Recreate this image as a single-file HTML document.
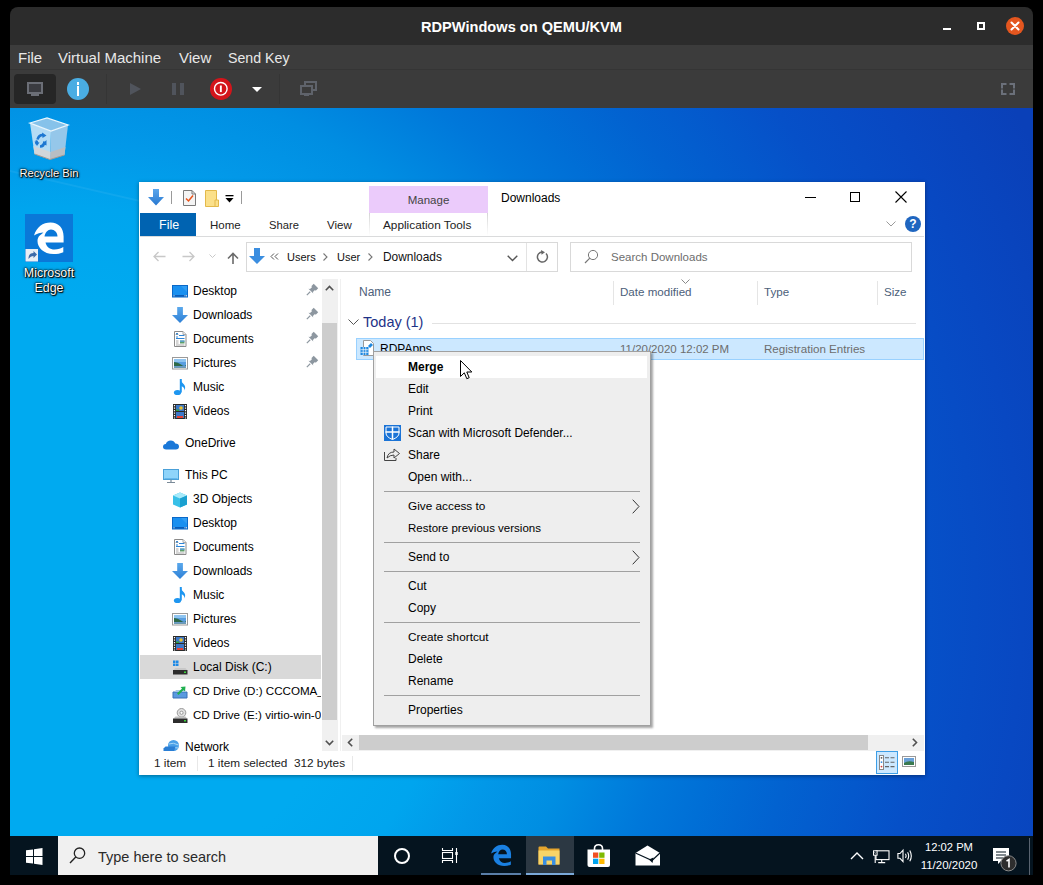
<!DOCTYPE html>
<html><head><meta charset="utf-8">
<style>
*{margin:0;padding:0;box-sizing:border-box}
html,body{width:1043px;height:885px;overflow:hidden;background:#000;font-family:"Liberation Sans",sans-serif}
.a{position:absolute}
svg{position:absolute;overflow:visible}
.s12{position:absolute;font-size:12px;line-height:16px;white-space:nowrap;color:#000}
.vmt{position:absolute;font-size:15px;line-height:20px;white-space:nowrap;color:#e8e8e8}
#vm{position:absolute;left:10px;top:7px;width:1023px;height:868px;border-radius:8px 8px 0 0;overflow:hidden;background:#2c2c2c}
#desk{position:absolute;left:10px;top:108px;width:1023px;height:767px;overflow:hidden;
 background:radial-gradient(circle at 55px 492px,#00aaf0 0px,#00aaf0 300px,#00a5ee 393px,#0298e8 458px,#008ee2 527px,#0078da 616px,#006fd6 667px,#0262d0 741px,#0458cc 811px,#0650c8 864px,#0848c2 957px,#0a40b8 1070px)}
.dt{position:absolute;font-size:12px;line-height:15px;color:#fff;text-align:center;white-space:nowrap;text-shadow:0 0 1px #000,1px 1px 1px #000,0 0 2px #000,0 0 3px rgba(0,0,0,.7)}
</style></head><body>
<div id="vm">
 <!-- title bar -->
 <div class="a" style="left:0;top:31px;width:1023px;height:7px;background:#2c2c2c"></div>
 <div class="a" style="left:0;top:11px;width:1023px;text-align:center;color:#fff;font-weight:bold;font-size:14.6px;line-height:18px">RDPWindows on QEMU/KVM</div>
 <!-- menu bar -->
 <div class="a" style="left:0;top:38px;width:1023px;height:24px;background:#3c3c3c"></div>
 <div class="a" style="left:0;top:62px;width:1023px;height:1px;background:#353535"></div>
 <div class="vmt" style="left:8px;top:41px">File</div>
 <div class="vmt" style="left:48px;top:41px">Virtual Machine</div>
 <div class="vmt" style="left:169px;top:41px">View</div>
 <div class="vmt" style="left:218px;top:41px;font-size:14.2px">Send Key</div>
 <!-- toolbar -->
 <div class="a" style="left:0;top:63px;width:1023px;height:38px;background:#3b3b3b"></div>
</div>
<!-- window controls -->
<div class="a" style="left:943px;top:28px;width:8px;height:2px;background:#fff"></div>
<div class="a" style="left:977px;top:22px;width:8px;height:8px;border:2px solid #fff"></div>
<div class="a" style="left:1006px;top:17px;width:18px;height:18px;border-radius:50%;background:#e4561f"></div>
<svg style="left:1006px;top:17px" width="18" height="18"><path d="M5.5 5.5L12.5 12.5M12.5 5.5L5.5 12.5" stroke="#fff" stroke-width="2" stroke-linecap="round"/></svg>
<!-- toolbar icons -->
<div class="a" style="left:14px;top:74px;width:42px;height:30px;border-radius:4px;background:#262626"></div>
<svg style="left:27px;top:82px" width="16" height="14"><rect x="1" y="1" width="14" height="10" fill="#3a3b40" stroke="#6b6e76" stroke-width="2"/><rect x="4" y="12" width="8" height="2" fill="#6b6e76"/></svg>
<div class="a" style="left:67px;top:78px;width:22px;height:22px;border-radius:50%;background:#4aade3"></div>
<div class="a" style="left:77px;top:82px;width:2px;height:2.5px;background:#fff"></div>
<div class="a" style="left:77px;top:86px;width:2px;height:10px;background:#fff"></div>
<div class="a" style="left:106px;top:74px;width:1px;height:30px;background:#353535"></div>
<svg style="left:130px;top:83px" width="12" height="12"><path d="M0 0L11 6L0 12Z" fill="#50545c"/></svg>
<div class="a" style="left:172px;top:83px;width:4px;height:12px;background:#50545c"></div>
<div class="a" style="left:180px;top:83px;width:4px;height:12px;background:#50545c"></div>
<div class="a" style="left:210px;top:78px;width:21.5px;height:21.5px;border-radius:50%;background:#d3151b"></div>
<svg style="left:210px;top:78px" width="22" height="22"><circle cx="10.8" cy="10.8" r="6.3" fill="none" stroke="#fff" stroke-width="1.4"/><rect x="9.9" y="7.5" width="1.9" height="6.6" fill="#fff"/></svg>
<svg style="left:252px;top:87px" width="10" height="5"><path d="M0 0H10L5 5Z" fill="#fff"/></svg>
<div class="a" style="left:279px;top:74px;width:1px;height:30px;background:#353535"></div>
<svg style="left:300px;top:81px" width="17" height="15"><rect x="5" y="1" width="11" height="8" fill="none" stroke="#5f636b" stroke-width="2"/><rect x="1" y="5" width="11" height="8" fill="#3b3b3b" stroke="#5f636b" stroke-width="2"/><rect x="4" y="13" width="5" height="2" fill="#5f636b"/></svg>
<svg style="left:1001px;top:83px" width="14" height="12"><path d="M1 4.5V1H4.5M9.5 1H13V4.5M13 7.5V11H9.5M4.5 11H1V7.5" fill="none" stroke="#6b707a" stroke-width="2" stroke-linecap="square"/></svg>

<div id="desk">
 <!-- beams -->
 <div class="a" style="left:0px;top:62px;width:700px;height:1.5px;background:rgba(255,255,255,.06);transform:rotate(13deg);transform-origin:0 0"></div>
 <!-- recycle bin -->
 <svg style="left:19px;top:9px" width="40" height="44" viewBox="0 0 40 44">
  <path d="M1 6 L22 14 L21 42.5 L5.5 37 Z" fill="#b4dcf5"/>
  <path d="M22 14 L39 8 L35.5 38 L21 42.5 Z" fill="#95c7ea"/>
  <path d="M4.3 29 L21.6 35 L21 42.5 L5.5 37Z" fill="#d2d6da"/>
  <path d="M21.6 35 L36.5 30 L35.5 38 L21 42.5 Z" fill="#b9bec3"/>
  <path d="M5.5 37 L21 42.5 L35.5 38" fill="none" stroke="#a09a94" stroke-width="1"/>
  <path d="M1 6 L18 1 L39 8 L22 14 Z" fill="#86c2ea" stroke="#eaf6fd" stroke-width="1.3"/>
  <g fill="none" stroke="#1e78d2" stroke-width="2.6">
   <path d="M8.5 22.5 Q10 17.5 14.5 18"/>
   <path d="M15.5 24.5 Q15 29.5 11 29.5"/>
   <path d="M8 27 Q7 25.5 8 23.5"/>
  </g>
  <g fill="#1e78d2"><path d="M13 15.5 L17.5 18.5 L13.5 21Z"/><path d="M17.5 23 L13.5 27 L17.5 28.5Z"/><path d="M5.5 24.5 L8 29 L10.5 25.5Z"/></g>
 </svg>
 <div class="dt" style="left:9px;top:58px;width:60px;font-size:11.2px">Recycle Bin</div>
 <!-- edge -->
 <div class="a" style="left:15px;top:106px;width:48px;height:48px;background:#0a78d8"></div>
 <svg style="left:15px;top:106px" width="48" height="48" viewBox="0 0 48 48">
  <path fill-rule="evenodd" fill="#fff" d="M38.6 28.5 L20.5 28.5 C21.5 33 25 35.5 29.5 35.5 C33 35.5 36 34.5 38.3 33 L38.3 38.2 C35.5 39.5 32 40 28.5 40 C18.5 40 12.5 33.5 12.5 27 C12.5 25 13.2 23.2 14.5 21.8 L18.5 18.5 C15.5 18.5 12 19.5 9 21.5 C11.5 13 18 8.5 25.5 8.5 C33.5 8.5 38.6 14 38.6 22.5 Z M19.5 22.5 L32.5 22.5 C32.5 18.5 29.5 15.5 26 15.5 C22.8 15.5 20.2 18.5 19.5 22.5 Z"/>
  <rect x="0.5" y="35" width="12.5" height="12.5" fill="#e8eef4"/>
  <path d="M3.5 45 C3.5 41 5 39 8.5 39 L8.5 37 L12 40.5 L8.5 44 L8.5 42 C6.5 42 5 43 3.5 45Z" fill="#3c6aa8"/>
 </svg>
 <div class="dt" style="left:8px;top:158px;width:62px;font-size:12.4px;line-height:15px">Microsoft<br>Edge</div>
 <!-- taskbar -->
 <div class="a" style="left:0;top:728px;width:1023px;height:39px;background:#05141f"></div>
 <svg style="left:16px;top:740px" width="17" height="17" viewBox="0 0 17 17"><path d="M0 2.3L7 1.4V8H0Z M8 1.2L16.5 0V8H8Z M0 9H7V15.6L0 14.7Z M8 9H16.5V17L8 15.8Z" fill="#fff"/></svg>
 <div class="a" style="left:48px;top:728px;width:320px;height:39px;background:#f0f0f0"></div>
 <svg style="left:59px;top:739px" width="20" height="20"><circle cx="10.5" cy="6.2" r="5.2" fill="none" stroke="#222" stroke-width="1.3"/><path d="M7 9.8L1 16" stroke="#222" stroke-width="1.4"/></svg>
 <div class="a" style="left:88px;top:740px;font-size:14.5px;line-height:18px;color:#2a2a2a;white-space:nowrap">Type here to search</div>
 <svg style="left:383px;top:738px" width="18" height="18"><circle cx="9" cy="10" r="7" fill="none" stroke="#fff" stroke-width="2"/></svg>
 <svg style="left:431px;top:739px" width="18" height="17" viewBox="0 0 18 17"><path d="M1.5 1V3.5H11.5V1M1.5 16V13.5H11.5V16M15.5 1V16" fill="none" stroke="#fff" stroke-width="1.1"/><rect x="1.5" y="5.5" width="10" height="6" fill="none" stroke="#fff" stroke-width="1.1"/><rect x="14.3" y="5" width="2.4" height="3" fill="#fff"/></svg>
 <!-- edge task -->
 <svg style="left:475px;top:731px" width="32.4" height="32.4" viewBox="0 0 48 48">
  <path fill-rule="evenodd" fill="#1a80e2" d="M38.6 28.5 L20.5 28.5 C21.5 33 25 35.5 29.5 35.5 C33 35.5 36 34.5 38.3 33 L38.3 38.2 C35.5 39.5 32 40 28.5 40 C18.5 40 12.5 33.5 12.5 27 C12.5 25 13.2 23.2 14.5 21.8 L18.5 18.5 C15.5 18.5 12 19.5 9 21.5 C11.5 13 18 8.5 25.5 8.5 C33.5 8.5 38.6 14 38.6 22.5 Z M19.5 22.5 L32.5 22.5 C32.5 18.5 29.5 15.5 26 15.5 C22.8 15.5 20.2 18.5 19.5 22.5 Z"/>
 </svg>
 <div class="a" style="left:471px;top:765px;width:40px;height:2px;background:#5a7ea8"></div>
 <div class="a" style="left:516px;top:728px;width:48px;height:39px;background:#2c3843"></div>
 <div class="a" style="left:516px;top:765px;width:48px;height:2px;background:#7aa8d8"></div>
 <svg style="left:528px;top:738px" width="23" height="20" viewBox="0 0 23 20">
  <path d="M0.5 1.5Q0.5 0.5 1.5 0.5H8L10 2.5H21.5V18.5H0.5Z" fill="#e6a52e"/>
  <path d="M0.5 4.5H21.5V18.5H0.5Z" fill="#f8d468"/>
  <path d="M5 10.5H17.5V19H14V14.5H8.5V19H5Z" fill="#3a8ee0"/>
 </svg>
 <svg style="left:577px;top:736px" width="24" height="24" viewBox="0 0 24 24">
  <path d="M7.5 6.5V4.5Q7.5 0.8 11.5 0.8Q15.5 0.8 15.5 4.5V6.5" fill="none" stroke="#fff" stroke-width="1.6"/>
  <path d="M0.5 5.5H23V21Q23 23 21 23H2.5Q0.5 23 0.5 21Z" fill="#fff"/>
  <rect x="6" y="8.5" width="5.3" height="5.3" fill="#f25022"/><rect x="12.2" y="8.5" width="5.3" height="5.3" fill="#7fba00"/>
  <rect x="6" y="14.7" width="5.3" height="5.3" fill="#00a4ef"/><rect x="12.2" y="14.7" width="5.3" height="5.3" fill="#ffb900"/>
 </svg>
 <svg style="left:625px;top:737px" width="26" height="21" viewBox="0 0 26 21">
  <path d="M0.5 8L12.5 0.5L25 8V20.5H0.5Z" fill="#fff"/>
  <path d="M0.5 8L17 15.5L25 8" fill="none" stroke="#05141f" stroke-width="1.2"/>
  <path d="M14 14.5L18.5 12.5L17.5 18Z" fill="#05141f"/>
 </svg>
 <!-- tray -->
 <svg style="left:840px;top:743px" width="14" height="9"><path d="M1 8L7 2L13 8" fill="none" stroke="#fff" stroke-width="1.4"/></svg>
 <svg style="left:863px;top:742px" width="18" height="15" viewBox="0 0 18 15"><rect x="3" y="0.8" width="13" height="8.8" fill="none" stroke="#fff" stroke-width="1.1"/><rect x="0.5" y="0.8" width="3.6" height="4.4" fill="#05141f" stroke="#fff" stroke-width="1"/><path d="M1.4 2.4L2.3 3.4L3.2 2.4" fill="none" stroke="#fff" stroke-width=".7"/><path d="M2.2 5.2V13M8.7 9.6V12.6M5.2 12.6H12.2" stroke="#fff" stroke-width="1.1"/></svg>
 <svg style="left:887px;top:741px" width="18" height="15" viewBox="0 0 18 15"><path d="M0.9 4.5H3L6 1.2V12.6L3 9.3H0.9Z" fill="none" stroke="#fff" stroke-width="1.1"/><path d="M8.5 4.8Q9.8 6.9 8.5 9M10.6 3.2Q12.8 6.9 10.6 10.6M12.8 1.5Q15.8 6.9 12.8 12.3" fill="none" stroke="#fff" stroke-width="1.1"/></svg>
 <div class="a" style="left:915px;top:731px;width:48px;text-align:center;color:#fff;font-size:11.2px;line-height:16px">12:02 PM</div>
 <div class="a" style="left:909px;top:749px;width:60px;text-align:center;color:#fff;font-size:11.5px;line-height:16px">11/20/2020</div>
 <svg style="left:982px;top:739px" width="26" height="26" viewBox="0 0 26 26">
  <path d="M1 1H17V14H9L6 17V14H1Z" fill="#fff"/>
  <path d="M4 5H14M4 8H14M4 11H11" stroke="#05141f" stroke-width="1.2"/>
  <circle cx="16.5" cy="16.3" r="7.6" fill="#2e2e2e" stroke="#8a8a8a" stroke-width="1"/>
  <path d="M14.5 14.2L17 12.5V20.5" fill="none" stroke="#fff" stroke-width="1.6"/>
 </svg>
 <div class="a" style="left:1019px;top:730px;width:1px;height:37px;background:#5a6470"></div>
</div>
<!-- EXPLORER -->
<div class="a" style="left:139px;top:182px;width:786px;height:593px;background:#fff;box-shadow:0 1px 4px rgba(0,0,0,.4)"></div>
<svg style="left:148px;top:189px" width="16" height="17" viewBox="0 0 16 17"><defs><linearGradient id="dg" x1="0" x2="0" y1="0" y2="1"><stop offset="0" stop-color="#5aa6ec"/><stop offset="1" stop-color="#2878d0"/></linearGradient></defs><path d="M5 0H11V8H16L8 16.5L0 8H5Z" fill="url(#dg)"/></svg>
<div class="a" style="left:171px;top:191px;width:1px;height:13px;background:#9a9a9a"></div>
<svg style="left:183px;top:190px" width="13" height="16" viewBox="0 0 13 16"><path d="M0.5 0.5H9L12.5 4V15.5H0.5Z" fill="#f4f4f4" stroke="#7a7a7a"/><path d="M9 0.5V4H12.5" fill="none" stroke="#7a7a7a"/><path d="M3 8.5L5.5 11L10 5.5" fill="none" stroke="#e8541c" stroke-width="1.5"/></svg>
<svg style="left:205px;top:190px" width="14" height="17" viewBox="0 0 14 17"><path d="M0.5 0.5H11.5V16.5H0.5Z" fill="#fbe08a" stroke="#e3b94a"/><path d="M10 10H13.5V16.5H10Z" fill="#fbe08a" stroke="#e3b94a"/></svg>
<svg style="left:225px;top:195px" width="9" height="8"><rect x="0.5" y="0" width="8" height="1.3" fill="#000"/><path d="M0.5 3H8.5L4.5 7.5Z" fill="#000"/></svg>
<div class="a" style="left:241px;top:191px;width:1px;height:13px;background:#9a9a9a"></div>
<div class="a" style="left:369px;top:186px;width:119px;height:27px;background:#ebcbfb"></div>
<div class="s12" style="left:369px;top:192px;width:119px;text-align:center;color:#444;font-size:11.5px">Manage</div>
<div class="s12" style="left:501px;top:190px;color:#000">Downloads</div>
<div class="a" style="left:805px;top:197px;width:11px;height:1px;background:#000"></div>
<div class="a" style="left:850px;top:192px;width:10px;height:10px;border:1px solid #000"></div>
<svg style="left:895px;top:191px" width="12" height="12"><path d="M0.5 0.5L11.5 11.5M11.5 0.5L0.5 11.5" stroke="#000" stroke-width="1.1"/></svg>
<div class="a" style="left:140px;top:213px;width:56px;height:23px;background:#0063b1"></div>
<div class="s12" style="left:159px;top:217px;color:#fff;font-size:12.5px">File</div>
<div class="s12" style="left:210px;top:217px;color:#222;font-size:11.5px">Home</div>
<div class="s12" style="left:269px;top:217px;color:#222;font-size:11.2px">Share</div>
<div class="s12" style="left:327px;top:217px;color:#222;font-size:11.5px">View</div>
<div class="a" style="left:369px;top:213px;width:1px;height:23px;background:linear-gradient(#d5d5d5,#fff)"></div>
<div class="a" style="left:487px;top:213px;width:1px;height:23px;background:linear-gradient(#d5d5d5,#fff)"></div>
<div class="s12" style="left:383px;top:217px;color:#222;font-size:11.8px">Application Tools</div>
<svg style="left:886px;top:221px" width="10" height="6"><path d="M0.5 0.5L5 5L9.5 0.5" fill="none" stroke="#9a9a9a" stroke-width="1"/></svg>
<div class="a" style="left:905px;top:216px;width:16px;height:16px;border-radius:50%;background:#1f66c0"></div>
<div class="a" style="left:905px;top:216px;width:16px;height:16px;text-align:center;color:#fff;font-weight:bold;font-size:12px;line-height:16px">?</div>
<div class="a" style="left:140px;top:236px;width:784px;height:1px;background:#dadbdc"></div>
<svg style="left:153px;top:251px" width="13" height="11"><path d="M12.5 5.5H1M5.5 1L1 5.5L5.5 10" fill="none" stroke="#c8c8c8" stroke-width="1.3"/></svg>
<svg style="left:182px;top:251px" width="13" height="11"><path d="M0.5 5.5H12M7.5 1L12 5.5L7.5 10" fill="none" stroke="#c8c8c8" stroke-width="1.3"/></svg>
<svg style="left:209px;top:254px" width="7" height="5"><path d="M0.5 0.5L3.5 3.5L6.5 0.5" fill="none" stroke="#c8c8c8" stroke-width="1"/></svg>
<svg style="left:227px;top:252px" width="12" height="12"><path d="M6 12V1.5M1 6.5L6 1.5L11 6.5" fill="none" stroke="#6a6a6a" stroke-width="1.6"/></svg>
<div class="a" style="left:246px;top:242px;width:312px;height:30px;border:1px solid #d9d9d9"></div>
<div class="a" style="left:526px;top:243px;width:1px;height:28px;background:#e3e3e3"></div>
<svg style="left:249px;top:248px" width="16" height="16" viewBox="0 0 16 16"><path d="M5 0H11V8H16L8 16L0 8H5Z" fill="#3b8ee0"/></svg>
<svg style="left:270px;top:253px" width="9" height="7"><path d="M4 0.5L1 3.5L4 6.5M8 0.5L5 3.5L8 6.5" fill="none" stroke="#555" stroke-width="1"/></svg>
<div class="s12" style="left:287px;top:249px;color:#111;font-size:11px">Users</div>
<svg style="left:323px;top:253px" width="5" height="8"><path d="M0.5 0.5L4 4L0.5 7.5" fill="none" stroke="#777" stroke-width="1.1"/></svg>
<div class="s12" style="left:337px;top:249px;color:#111;font-size:11px">User</div>
<svg style="left:368px;top:253px" width="5" height="8"><path d="M0.5 0.5L4 4L0.5 7.5" fill="none" stroke="#777" stroke-width="1.1"/></svg>
<div class="s12" style="left:383px;top:249px;color:#111;font-size:11.9px">Downloads</div>
<svg style="left:507px;top:255px" width="11" height="7"><path d="M0.7 0.7L5.5 5.5L10.3 0.7" fill="none" stroke="#555" stroke-width="1.4"/></svg>
<svg style="left:536px;top:250px" width="13" height="14"><path d="M10 3.5A5 5 0 1 1 6.5 2" fill="none" stroke="#666" stroke-width="1.5"/><path d="M5 0L9 2.2L5.5 4.8Z" fill="#666"/></svg>
<div class="a" style="left:570px;top:242px;width:342px;height:30px;border:1px solid #d9d9d9"></div>
<svg style="left:584px;top:249px" width="15" height="15"><circle cx="9" cy="6" r="4.6" fill="none" stroke="#777" stroke-width="1"/><path d="M5.8 9.2L1 14" stroke="#777" stroke-width="1.2"/></svg>
<div class="s12" style="left:611px;top:249px;color:#6d6d6d;font-size:11.5px">Search Downloads</div>
<div class="a" style="left:322px;top:279px;width:16px;height:472px;background:#f0f0f0"></div>
<div class="a" style="left:322px;top:323px;width:15px;height:397px;background:#cdcdcd"></div>
<svg style="left:325px;top:285px" width="9" height="6"><path d="M0.8 5.2L4.5 1.5L8.2 5.2" fill="none" stroke="#505050" stroke-width="1.6"/></svg>
<svg style="left:325px;top:740px" width="9" height="6"><path d="M0.8 0.8L4.5 4.5L8.2 0.8" fill="none" stroke="#505050" stroke-width="1.6"/></svg>
<div class="a" style="left:340px;top:279px;width:1px;height:472px;background:#f0f0f0"></div>
<div class="a" style="left:140px;top:655px;width:181px;height:24px;background:#d9d9d9"></div>
<!-- NAV START -->
<svg style="left:172px;top:284px" width="16" height="16" viewBox="0 0 16 16"><rect x="0.5" y="1.5" width="15" height="11.5" fill="#1a90f0" stroke="#0a68c8"/><path d="M9 2L15 2L15 8Z" fill="#40a8f6" opacity=".6"/><rect x="1" y="11" width="14" height="1.6" fill="#0a5cb8"/><rect x="1.5" y="11.3" width="1" height="1" fill="#fff"/><rect x="12.5" y="11.3" width="1" height="1" fill="#fff"/><rect x="14" y="11.3" width="1" height="1" fill="#fff"/></svg>
<div class="s12" style="left:193px;top:283px;">Desktop</div>
<svg style="left:306px;top:283px" width="13" height="13" viewBox="0 0 16 16"><path d="M5.2 10.8L1 15" stroke="#8d97a0" stroke-width="1.4"/><path d="M6.5 4L9.5 1L15 6.5L12 9.5L11 8.5L8.5 11L9 13L3 7L5 7.5L7.5 5Z" fill="#8d97a0"/></svg>
<svg style="left:172px;top:308px" width="16" height="16" viewBox="0 0 16 16"><defs><linearGradient id="dgn" x1="0" x2="0" y1="0" y2="1"><stop offset="0" stop-color="#5aa8ec"/><stop offset="1" stop-color="#2e80d6"/></linearGradient></defs><path d="M5.2 -1H10.9V7H16L8 15L0 7H5.2Z" fill="url(#dgn)"/></svg>
<div class="s12" style="left:193px;top:307px;">Downloads</div>
<svg style="left:306px;top:307px" width="13" height="13" viewBox="0 0 16 16"><path d="M5.2 10.8L1 15" stroke="#8d97a0" stroke-width="1.4"/><path d="M6.5 4L9.5 1L15 6.5L12 9.5L11 8.5L8.5 11L9 13L3 7L5 7.5L7.5 5Z" fill="#8d97a0"/></svg>
<svg style="left:172px;top:332px" width="16" height="16" viewBox="0 0 16 16"><path d="M2.5 -0.5H11L14 2.5V14.5H2.5Z" fill="#fff" stroke="#8a8a8a"/><path d="M11 -0.5V2.5H14" fill="#eee" stroke="#aaa"/><path d="M4 5H6M4 2.5L5 1L6 2.5" stroke="#2e86d8" stroke-width="1"/><path d="M7 3.5H12.5M4 6.5H12.5" stroke="#2e86d8" stroke-width="1"/><path d="M4 9H6.5M4 11H6.5M4 13H12.5" stroke="#a0a0a0" stroke-width=".9"/><rect x="8" y="8.5" width="4.5" height="3" fill="#5e9e6a"/><rect x="8" y="8.5" width="4.5" height="1.2" fill="#5aa0e8"/></svg>
<div class="s12" style="left:193px;top:331px;">Documents</div>
<svg style="left:306px;top:331px" width="13" height="13" viewBox="0 0 16 16"><path d="M5.2 10.8L1 15" stroke="#8d97a0" stroke-width="1.4"/><path d="M6.5 4L9.5 1L15 6.5L12 9.5L11 8.5L8.5 11L9 13L3 7L5 7.5L7.5 5Z" fill="#8d97a0"/></svg>
<svg style="left:172px;top:356px" width="16" height="16" viewBox="0 0 16 16"><rect x="0.5" y="1.5" width="15" height="11.5" fill="#fff" stroke="#9a9a9a"/><rect x="2" y="3" width="12" height="8.5" fill="#5a9ee0"/><rect x="2" y="3" width="12" height="3" fill="#8ec4f0"/><path d="M2 6Q6 6 9 8.5T14 9V11.5H2Z" fill="#2e6a48"/><rect x="2" y="10" width="12" height="1.5" fill="#6a9ac8"/></svg>
<div class="s12" style="left:193px;top:355px;">Pictures</div>
<svg style="left:306px;top:355px" width="13" height="13" viewBox="0 0 16 16"><path d="M5.2 10.8L1 15" stroke="#8d97a0" stroke-width="1.4"/><path d="M6.5 4L9.5 1L15 6.5L12 9.5L11 8.5L8.5 11L9 13L3 7L5 7.5L7.5 5Z" fill="#8d97a0"/></svg>
<svg style="left:172px;top:380px" width="16" height="16" viewBox="0 0 16 16"><path d="M8.8 -1V12.5" stroke="#1e96f0" stroke-width="2"/><ellipse cx="5.5" cy="12.5" rx="3.6" ry="2.6" fill="#1e96f0"/><path d="M8 -1Q9.5 2.5 12 4.5Q14 6.5 12.5 10.5Q12.8 7 9 6Z" fill="#1e96f0"/></svg>
<div class="s12" style="left:193px;top:379px;">Music</div>
<svg style="left:172px;top:404px" width="16" height="16" viewBox="0 0 16 16"><rect x="1" y="0" width="14" height="15" fill="#2a2a2a"/><rect x="4" y="1" width="8" height="6" fill="#3c78c8"/><rect x="4" y="8" width="8" height="6" fill="#3c78c8"/><circle cx="9" cy="4" r="1.8" fill="#e8c030"/><rect x="4" y="5.5" width="3" height="1.5" fill="#30a040"/><rect x="5" y="12" width="6" height="2" fill="#e84030"/><path d="M2.5 1V14.5M13.5 1V14.5" stroke="#fff" stroke-width="1.2" stroke-dasharray="1.2 1.3"/></svg>
<div class="s12" style="left:193px;top:403px;">Videos</div>
<svg style="left:163px;top:436px" width="16" height="16" viewBox="0 0 16 16"><path d="M3.2 13.5Q0 13.5 0 10.8Q0 8.3 2.8 8Q3.8 4.5 7.8 4.5Q11 4.5 12.3 7.5Q16 7.6 16 10.6Q16 13.5 12.8 13.5Z" fill="#1a78d8"/></svg>
<div class="s12" style="left:185px;top:435px;">OneDrive</div>
<svg style="left:163px;top:468px" width="16" height="16" viewBox="0 0 16 16"><rect x="0.5" y="1.5" width="15" height="10" fill="#8fd4fa" stroke="#4aa0d8"/><path d="M1.5 10.5H14.5" stroke="#64b8ec"/><path d="M8 11.5V14M4 14.5H12" stroke="#7a8a98" stroke-width="1.2"/></svg>
<div class="s12" style="left:185px;top:467px;">This PC</div>
<svg style="left:172px;top:492px" width="16" height="16" viewBox="0 0 16 16"><path d="M8 0.5L15 3.5V12.5L8 15.5L1 12.5V3.5Z" fill="#38c0e8"/><path d="M1 3.5L8 6.5L15 3.5L8 0.5Z" fill="#a8eafa"/><path d="M8 6.5V15.5L15 12.5V3.5Z" fill="#1aa0d0"/></svg>
<div class="s12" style="left:193px;top:491px;">3D Objects</div>
<svg style="left:172px;top:516px" width="16" height="16" viewBox="0 0 16 16"><rect x="0.5" y="1.5" width="15" height="11.5" fill="#1a90f0" stroke="#0a68c8"/><path d="M9 2L15 2L15 8Z" fill="#40a8f6" opacity=".6"/><rect x="1" y="11" width="14" height="1.6" fill="#0a5cb8"/><rect x="1.5" y="11.3" width="1" height="1" fill="#fff"/><rect x="12.5" y="11.3" width="1" height="1" fill="#fff"/><rect x="14" y="11.3" width="1" height="1" fill="#fff"/></svg>
<div class="s12" style="left:193px;top:515px;">Desktop</div>
<svg style="left:172px;top:540px" width="16" height="16" viewBox="0 0 16 16"><path d="M2.5 -0.5H11L14 2.5V14.5H2.5Z" fill="#fff" stroke="#8a8a8a"/><path d="M11 -0.5V2.5H14" fill="#eee" stroke="#aaa"/><path d="M4 5H6M4 2.5L5 1L6 2.5" stroke="#2e86d8" stroke-width="1"/><path d="M7 3.5H12.5M4 6.5H12.5" stroke="#2e86d8" stroke-width="1"/><path d="M4 9H6.5M4 11H6.5M4 13H12.5" stroke="#a0a0a0" stroke-width=".9"/><rect x="8" y="8.5" width="4.5" height="3" fill="#5e9e6a"/><rect x="8" y="8.5" width="4.5" height="1.2" fill="#5aa0e8"/></svg>
<div class="s12" style="left:193px;top:539px;">Documents</div>
<svg style="left:172px;top:564px" width="16" height="16" viewBox="0 0 16 16"><defs><linearGradient id="dgn" x1="0" x2="0" y1="0" y2="1"><stop offset="0" stop-color="#5aa8ec"/><stop offset="1" stop-color="#2e80d6"/></linearGradient></defs><path d="M5.2 -1H10.9V7H16L8 15L0 7H5.2Z" fill="url(#dgn)"/></svg>
<div class="s12" style="left:193px;top:563px;">Downloads</div>
<svg style="left:172px;top:588px" width="16" height="16" viewBox="0 0 16 16"><path d="M8.8 -1V12.5" stroke="#1e96f0" stroke-width="2"/><ellipse cx="5.5" cy="12.5" rx="3.6" ry="2.6" fill="#1e96f0"/><path d="M8 -1Q9.5 2.5 12 4.5Q14 6.5 12.5 10.5Q12.8 7 9 6Z" fill="#1e96f0"/></svg>
<div class="s12" style="left:193px;top:587px;">Music</div>
<svg style="left:172px;top:612px" width="16" height="16" viewBox="0 0 16 16"><rect x="0.5" y="1.5" width="15" height="11.5" fill="#fff" stroke="#9a9a9a"/><rect x="2" y="3" width="12" height="8.5" fill="#5a9ee0"/><rect x="2" y="3" width="12" height="3" fill="#8ec4f0"/><path d="M2 6Q6 6 9 8.5T14 9V11.5H2Z" fill="#2e6a48"/><rect x="2" y="10" width="12" height="1.5" fill="#6a9ac8"/></svg>
<div class="s12" style="left:193px;top:611px;">Pictures</div>
<svg style="left:172px;top:636px" width="16" height="16" viewBox="0 0 16 16"><rect x="1" y="0" width="14" height="15" fill="#2a2a2a"/><rect x="4" y="1" width="8" height="6" fill="#3c78c8"/><rect x="4" y="8" width="8" height="6" fill="#3c78c8"/><circle cx="9" cy="4" r="1.8" fill="#e8c030"/><rect x="4" y="5.5" width="3" height="1.5" fill="#30a040"/><rect x="5" y="12" width="6" height="2" fill="#e84030"/><path d="M2.5 1V14.5M13.5 1V14.5" stroke="#fff" stroke-width="1.2" stroke-dasharray="1.2 1.3"/></svg>
<div class="s12" style="left:193px;top:635px;">Videos</div>
<svg style="left:172px;top:660px" width="16" height="16" viewBox="0 0 16 16"><rect x="1" y="0.5" width="2.5" height="2.5" fill="#1e8ae6"/><rect x="4" y="0.5" width="2.5" height="2.5" fill="#1e8ae6"/><rect x="1" y="3.5" width="2.5" height="2.5" fill="#1e8ae6"/><rect x="4" y="3.5" width="2.5" height="2.5" fill="#1e8ae6"/><path d="M1.5 10L3.5 8H13.5L15 10Z" fill="#c8c8c8"/><rect x="1" y="10" width="14.5" height="4.5" fill="#2c2c2c"/><rect x="12" y="11.5" width="2" height="1.5" fill="#3ad23a"/></svg>
<div class="s12" style="left:193px;top:659px;">Local Disk (C:)</div>
<svg style="left:172px;top:684px" width="16" height="16" viewBox="0 0 16 16"><path d="M1 8H15V14H1Z" fill="#5a9ae0" stroke="#3a70b8"/><path d="M2.5 8L4 6H13L14.5 8Z" fill="#a8c8e8"/><path d="M5 9.5L10 4.5L8.5 3L13.5 2.5L13 7.5L11.5 6L6.5 11Z" fill="#20b050"/></svg>
<div class="a" style="left:193px;top:683px;width:128px;height:16px;overflow:hidden"><div class="s12" style="left:0;top:0;font-size:11.6px">CD Drive (D:) CCCOMA_</div></div>
<svg style="left:172px;top:708px" width="16" height="16" viewBox="0 0 16 16"><circle cx="9.5" cy="4.8" r="4.3" fill="#e0e0e0" stroke="#9a9a9a"/><circle cx="9.5" cy="4.8" r="1.6" fill="#fff" stroke="#999"/><path d="M1.5 10.5L3.5 8.5H13.5L15 10.5Z" fill="#c0c0c0"/><rect x="1" y="10.5" width="14.5" height="4.5" fill="#2c2c2c"/><rect x="12" y="12" width="2" height="1.5" fill="#3ad23a"/></svg>
<div class="a" style="left:193px;top:707px;width:128px;height:16px;overflow:hidden"><div class="s12" style="left:0;top:0;font-size:11.6px">CD Drive (E:) virtio-win-0</div></div>
<div class="a" style="left:140px;top:735px;width:181px;height:16px;overflow:hidden"><svg style="left:23px;top:4px" width="16" height="16" viewBox="0 0 16 16"><circle cx="10.5" cy="6.5" r="5.5" fill="#4aa0e8"/><path d="M6 5Q10 3 15.5 6M7 9Q10 8 15 9" stroke="#a8d8f8" stroke-width="1" fill="none"/><path d="M0.5 9.5L2.5 7.5H12.5L11 12.5H0.5Z" fill="#2a7ed4"/><rect x="0.5" y="12.5" width="10.5" height="1.5" fill="#1a5aa8"/></svg>
<div class="s12" style="left:45px;top:4px">Network</div></div>
<!-- NAV END -->
<div class="s12" style="left:359px;top:284px;color:#4c607a">Name</div>
<div class="s12" style="left:620px;top:284px;color:#4c607a;font-size:11.6px">Date modified</div>
<div class="s12" style="left:764px;top:284px;color:#4c607a;font-size:11.6px">Type</div>
<div class="s12" style="left:884px;top:284px;color:#4c607a;font-size:11.6px">Size</div>
<div class="a" style="left:613px;top:281px;width:1px;height:24px;background:#e5e5e5"></div>
<div class="a" style="left:757px;top:281px;width:1px;height:24px;background:#e5e5e5"></div>
<div class="a" style="left:877px;top:281px;width:1px;height:24px;background:#e5e5e5"></div>
<svg style="left:681px;top:279px" width="9" height="5"><path d="M0.5 0.5L4.5 4.5L8.5 0.5" fill="none" stroke="#888" stroke-width="1"/></svg>
<svg style="left:348px;top:319px" width="11" height="7"><path d="M0.5 0.5L5.5 5.5L10.5 0.5" fill="none" stroke="#555" stroke-width="1"/></svg>
<div class="a" style="left:363px;top:313px;font-size:14.5px;line-height:18px;color:#1e3287;white-space:nowrap">Today (1)</div>
<div class="a" style="left:432px;top:323px;width:484px;height:1px;background:#e2e2e2"></div>
<div class="a" style="left:356px;top:338px;width:568px;height:22px;background:#cce8ff;border:1px solid #99d1ff"></div>
<svg style="left:360px;top:340px" width="15" height="16" viewBox="0 0 15 16"><path d="M3.5 0.5H10.5L13.5 3.5V15.5H3.5Z" fill="#fff" stroke="#9a9a9a"/><rect x="0.5" y="7" width="8" height="8" fill="#1e88e0"/><path d="M0.5 9.7H8.5M0.5 12.3H8.5M3.2 7V15M5.8 7V15" stroke="#fff" stroke-width="0.7"/><path d="M8 6L11 3L13 5L10 8Z" fill="#1e88e0"/></svg>
<div class="s12" style="left:380px;top:341px;">RDPApps</div>
<div class="s12" style="left:620px;top:341px;color:#6d6d6d;font-size:11.5px">11/20/2020 12:02 PM</div>
<div class="s12" style="left:764px;top:341px;color:#6d6d6d;font-size:11.6px">Registration Entries</div>
<div class="a" style="left:342px;top:735px;width:582px;height:16px;background:#f0f0f0"></div>
<div class="a" style="left:359px;top:735px;width:509px;height:15px;background:#cdcdcd"></div>
<svg style="left:347px;top:738px" width="6" height="9"><path d="M5.2 0.8L1.5 4.5L5.2 8.2" fill="none" stroke="#505050" stroke-width="1.6"/></svg>
<svg style="left:912px;top:738px" width="6" height="9"><path d="M0.8 0.8L4.5 4.5L0.8 8.2" fill="none" stroke="#505050" stroke-width="1.6"/></svg>
<div class="s12" style="left:154px;top:755px;color:#222;font-size:11.8px">1 item</div>
<div class="a" style="left:197px;top:756px;width:1px;height:15px;background:#e8e8e8"></div>
<div class="s12" style="left:208px;top:755px;color:#222;font-size:11.8px">1 item selected&nbsp; 312 bytes</div>
<div class="a" style="left:352px;top:756px;width:1px;height:15px;background:#e8e8e8"></div>
<div class="a" style="left:876px;top:751px;width:22px;height:23px;background:#cce8ff;border:1px solid #3d9ee6"></div>
<svg style="left:879px;top:755px" width="16" height="15" viewBox="0 0 16 15"><rect x="0.5" y="0.5" width="4" height="14" fill="#fff" stroke="#888"/><circle cx="2.5" cy="2.8" r="0.9" fill="#555"/><circle cx="2.5" cy="7.2" r="0.9" fill="#3a8ee0"/><circle cx="2.5" cy="11.6" r="0.9" fill="#d03a3a"/><path d="M6 2.8H10M11.5 2.8H15.5M6 7.2H10M11.5 7.2H15.5M6 11.6H10M11.5 11.6H15.5" stroke="#666" stroke-width="1.1"/></svg>
<svg style="left:902px;top:756px" width="14" height="11" viewBox="0 0 14 11"><rect x="0.5" y="0.5" width="13" height="10" fill="#fff" stroke="#999"/><rect x="2" y="2" width="10" height="7" fill="#6aa0d8"/><path d="M2 7Q6 4 12 6V9H2Z" fill="#3a7a50"/></svg>
<div class="a" style="left:373px;top:351px;width:278px;height:375px;background:#eeeeee;border:1px solid #a0a0a0;box-shadow:2px 2px 2px rgba(0,0,0,.35)"></div>
<div class="a" style="left:376px;top:356px;width:271px;height:22px;background:#fff"></div>
<div class="s12" style="left:408px;top:359px;font-weight:bold">Merge</div>
<div class="s12" style="left:408px;top:381px;">Edit</div>
<div class="s12" style="left:408px;top:403px;">Print</div>
<div class="s12" style="left:408px;top:425px;font-size:11.9px">Scan with Microsoft Defender...</div>
<div class="s12" style="left:408px;top:447px;">Share</div>
<div class="s12" style="left:408px;top:469px;">Open with...</div>
<div class="s12" style="left:408px;top:498px;font-size:11.8px">Give access to</div>
<div class="s12" style="left:408px;top:520px;font-size:11.5px">Restore previous versions</div>
<div class="s12" style="left:408px;top:549px;">Send to</div>
<div class="s12" style="left:408px;top:578px;">Cut</div>
<div class="s12" style="left:408px;top:600px;">Copy</div>
<div class="s12" style="left:408px;top:629px;font-size:11.8px">Create shortcut</div>
<div class="s12" style="left:408px;top:651px;">Delete</div>
<div class="s12" style="left:408px;top:673px;">Rename</div>
<div class="s12" style="left:408px;top:702px;">Properties</div>
<div class="a" style="left:384px;top:491px;width:256px;height:1px;background:#a0a0a0"></div>
<div class="a" style="left:384px;top:542px;width:256px;height:1px;background:#a0a0a0"></div>
<div class="a" style="left:384px;top:571px;width:256px;height:1px;background:#a0a0a0"></div>
<div class="a" style="left:384px;top:622px;width:256px;height:1px;background:#a0a0a0"></div>
<div class="a" style="left:384px;top:695px;width:256px;height:1px;background:#a0a0a0"></div>
<svg style="left:632px;top:499px" width="8" height="15"><path d="M0.7 0.7L7 7.5L0.7 14.3" fill="none" stroke="#333" stroke-width="1"/></svg>
<svg style="left:632px;top:550px" width="8" height="15"><path d="M0.7 0.7L7 7.5L0.7 14.3" fill="none" stroke="#333" stroke-width="1"/></svg>
<svg style="left:384px;top:425px" width="17" height="16" viewBox="0 0 17 16"><rect x="0" y="0" width="17" height="16" fill="#1a73d6"/><path d="M8.5 1.5V14.5M1.5 7H15.5" stroke="#fff" stroke-width="1.5"/><path d="M2 2H15V8Q15 12 8.5 14.5Q2 12 2 8Z" fill="none" stroke="#fff" stroke-width="1"/></svg>
<svg style="left:384px;top:447px" width="17" height="14" viewBox="0 0 17 14"><path d="M0.5 5V13.5H12V11" fill="none" stroke="#444" stroke-width="1"/><path d="M3 11Q4 5 10 5V2L15.5 6.5L10 11V8Q6 8 3 11Z" fill="none" stroke="#444" stroke-width="1"/></svg>
<svg style="left:460px;top:360px" width="13" height="20" viewBox="0 0 13 20"><path d="M0.5 0.5V16.5L4.3 12.8L6.8 18.7L9.2 17.7L6.8 12H11.8Z" fill="#fff" stroke="#000" stroke-width="1"/></svg>
</body></html>
